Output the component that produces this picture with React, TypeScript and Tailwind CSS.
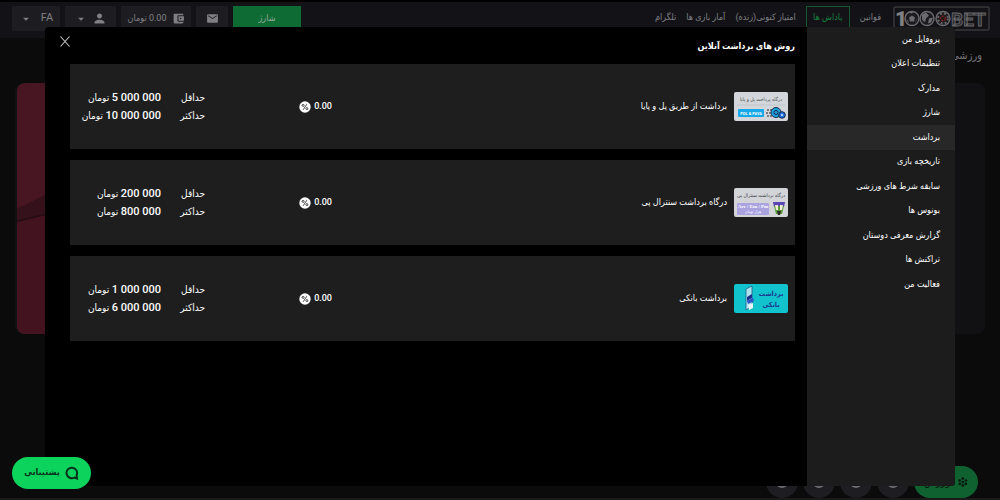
import React, { useState } from 'react';
import { MdPerson, MdEmail, MdAccountBalanceWallet, MdArrowDropDown } from 'react-icons/md';

const navLinks = [
  { label: 'قوانین' },
  { label: 'پاداش ها', highlighted: true },
  { label: 'امتیاز کنونی(زنده)' },
  { label: 'آمار بازی ها' },
  { label: 'تلگرام' },
];

const menuItems = [
  'پروفایل من',
  'تنظیمات اعلان',
  'مدارک',
  'شارژ',
  'برداشت',
  'تاریخچه بازی',
  'سابقه شرط های ورزشی',
  'بونوس ها',
  'گزارش معرفی دوستان',
  'تراکنش ها',
  'فعالیت من',
];

const methods = [
  { id: 'paya', name: 'برداشت از طریق پل و پایا', fee: '0.00', min: '5 000 000', max: '10 000 000' },
  { id: 'central', name: 'درگاه برداشت سنترال پی', fee: '0.00', min: '200 000', max: '800 000' },
  { id: 'bank', name: 'برداشت بانکی', fee: '0.00', min: '1 000 000', max: '6 000 000' },
];

const FONT = "font-[Roboto,'DejaVu_Sans_Condensed','DejaVu_Sans',sans-serif]";
const SVG_FONT = "'DejaVu Sans Condensed', 'DejaVu Sans', sans-serif";

const Logo: React.FC = () => (
  <svg width="97" height="25" viewBox="0 0 97 25" aria-label="1000BET" direction="ltr">
    <rect x="1" y="1" width="95" height="23" rx="1" fill="none" stroke="#4a4a4c" />
    <text x="2" y="20" fontSize="21" fontWeight="900" fill="#808083" fontFamily="Roboto, sans-serif">1</text>
    <g fill="#1b1b1d" stroke="#6c6c70" strokeWidth="1.4">
      <circle cx="19" cy="12.5" r="7" />
      <circle cx="34" cy="12.5" r="7" />
      <circle cx="50" cy="12.5" r="7" />
    </g>
    <path d="M19 9.5l3 2-1 4h-4l-1-4zM15 6.5l3-1 2 1-1 1zM13 13.5l2 1 1 3M25 11.5l-2 3-1 3" fill="#6c6c70" />
    <path d="M29 8.5l4-2 3 3-3 3-1 4-3-3zM36 12.5l4-1-2 5-3 1z" fill="#6c6c70" />
    <circle cx="50" cy="12.5" r="5" fill="none" stroke="#66666a" strokeWidth="2" strokeDasharray="2 2" />
    <circle cx="50" cy="12.5" r="2.4" fill="none" stroke="#8a1f1f" strokeWidth="1.2" strokeDasharray="2 1" />
    <text x="58" y="20" fontSize="19" fontWeight="700" fill="#2c2c2f" stroke="#68686b" strokeWidth="0.9" fontFamily="Roboto, sans-serif">BET</text>
  </svg>
);

const BallIcon: React.FC = () => (
  <svg width="14" height="14" viewBox="0 0 14 14" fill="#06180d" aria-hidden="true">
    <circle cx="7" cy="7" r="2" />
    <circle cx="7" cy="2" r="1.9" />
    <circle cx="11.6" cy="4.7" r="1.9" />
    <circle cx="11.4" cy="9.8" r="1.9" />
    <circle cx="7" cy="12" r="1.9" />
    <circle cx="2.6" cy="9.8" r="1.9" />
    <circle cx="2.4" cy="4.7" r="1.9" />
  </svg>
);

const PercentIcon: React.FC = () => (
  <svg width="12" height="12" viewBox="0 0 12 12" aria-hidden="true">
    <circle cx="6" cy="6" r="5.7" fill="#fff" />
    <g fill="none" stroke="#1e1e1e" strokeWidth="0.8">
      <path d="M7.8 3.2L4.2 8.8" />
      <circle cx="4.1" cy="4.4" r="1" />
      <circle cx="7.9" cy="7.6" r="1" />
    </g>
  </svg>
);

const Thumbnail: React.FC<{ id: string }> = ({ id }) => {
  if (id === 'paya') {
    return (
      <svg width="54" height="29" viewBox="0 0 54 29" direction="rtl" aria-hidden="true">
        <rect width="54" height="29" rx="2" fill="#d3d6da" />
        <text x="27" y="9" fontSize="5" fill="#44474c" textAnchor="middle" fontFamily={SVG_FONT}>درگاه پرداخت پل و پایا</text>
        <path d="M3 13h48" stroke="#b5b8bd" strokeWidth="0.6" />
        <rect x="4" y="17" width="26" height="8" rx="1" fill="#16a9ea" />
        <text x="17" y="23" fontSize="4" fontWeight="700" fill="#fff" textAnchor="middle" direction="ltr" fontFamily="Roboto, sans-serif">POL &amp; PAYA</text>
        <path d="M33 18h5M32 21h5M33 24h5" stroke="#20242c" strokeWidth="1" strokeDasharray="2 1" />
        <circle cx="42" cy="20.5" r="5" fill="#1d9fe0" stroke="#172b45" />
        <circle cx="42" cy="20.5" r="2" fill="none" stroke="#172b45" />
        <circle cx="48" cy="23" r="3.3" fill="#2370e0" stroke="#172b45" />
        <circle cx="48" cy="23" r="1" fill="#d3e8fb" />
      </svg>
    );
  }
  if (id === 'central') {
    return (
      <svg width="54" height="29" viewBox="0 0 54 29" direction="rtl" aria-hidden="true">
        <rect width="54" height="29" rx="2" fill="#d3d4d8" />
        <text x="27" y="9" fontSize="5" fill="#33353a" textAnchor="middle" fontFamily={SVG_FONT}>درگاه برداشت سنترال پی</text>
        <rect x="3" y="15" width="32" height="12" rx="1" fill="#aaa3e0" />
        <text x="19" y="20" fontSize="5" fontWeight="700" fill="#fff" textAnchor="middle" direction="ltr" fontFamily="'Liberation Serif', serif">Asv / Em / Pm</text>
        <text x="19" y="25" fontSize="4" fill="#fff" textAnchor="middle" fontFamily={SVG_FONT}>هزار تومان</text>
        <path d="M39 14h12l-1 5h-10z" fill="#5a45b5" />
        <path d="M40 18h10l-2 8h-6z" fill="#5c9a3c" />
        <path d="M41 17h3v5h-2zM46 17h3l-1 5h-2z" fill="#f1ead2" />
        <path d="M43 23h4l-1 4h-2z" fill="#2c2a25" />
      </svg>
    );
  }
  return (
    <svg width="54" height="29" viewBox="0 0 54 29" direction="rtl" aria-hidden="true">
      <rect width="54" height="29" rx="2" fill="#10c3cc" />
      <path d="M12 5l6-3v20l-6 4z" fill="#a9e3ee" stroke="#1c4a86" strokeWidth="0.7" />
      <path d="M13 13l5-3v4l-5 3z" fill="#1b2f86" />
      <path d="M13 17l6-3 1 3-6 3z" fill="#2a55c8" />
      <path d="M14 21l5-2v5l-4 2z" fill="#e8f3f5" />
      <text x="37" y="12" fontSize="7" fontWeight="700" fill="#1d3790" textAnchor="middle" fontFamily={SVG_FONT}>برداشت</text>
      <text x="37" y="23" fontSize="7" fontWeight="700" fill="#1d3790" textAnchor="middle" fontFamily={SVG_FONT}>بانکی</text>
    </svg>
  );
};

const Header: React.FC = () => (
  <header className="flex h-[38px] items-start justify-between border-t-2 border-black bg-[#131317] pl-3 pr-[10px] pt-1 text-[9px] text-[#808084]">
    <div className="flex items-start gap-3">
      <a href="#home">
        <Logo />
      </a>
      <nav className="flex items-start gap-[10px]">
        {navLinks.map((link) => (
          <a
            key={link.label}
            href="#nav"
            className={
              link.highlighted
                ? 'flex h-6 w-11 items-center justify-center whitespace-nowrap border border-[#12592f] text-[#158040]'
                : 'flex h-6 items-center whitespace-nowrap'
            }
          >
            {link.label}
          </a>
        ))}
      </nav>
    </div>

    <div className="flex gap-[5px]">
      <button type="button" className="h-[25px] w-[68px] bg-[#0f6b34] text-[#96a79b]">شارژ</button>
      <button type="button" aria-label="پیام ها" className="flex h-[25px] w-8 items-center justify-center bg-[#1d1d21]">
        <MdEmail size={13} />
      </button>
      <button type="button" className="flex h-[25px] w-[70px] items-center justify-center gap-[5px] whitespace-nowrap bg-[#1d1d21]">
        <MdAccountBalanceWallet size={13} />
        <span>0.00 تومان</span>
      </button>
      <button type="button" aria-label="حساب کاربری" className="flex h-[25px] w-[51px] items-center justify-center gap-1 bg-[#1d1d21]">
        <MdPerson size={15} />
        <MdArrowDropDown size={14} />
      </button>
      <button type="button" className="flex h-[25px] w-12 items-center justify-center gap-2 bg-[#1d1d21] text-[11px]">
        FA
        <MdArrowDropDown size={14} />
      </button>
    </div>
  </header>
);

const Banner: React.FC = () => (
  <section className="mx-[15px] mt-2 flex h-[251px] justify-end overflow-hidden rounded-lg bg-[#111113] pl-[2px]">
    <svg className="h-full w-1/2 rounded-l-lg" viewBox="0 0 480 251" preserveAspectRatio="xMinYMin slice" aria-hidden="true">
      <rect width="480" height="251" fill="#481522" />
      <path d="M0 125L30 110V250H0z" fill="#431420" />
      <path d="M0 125L30 110V130L0 138z" fill="#34111b" />
      <path d="M0 137L30 130" stroke="#260c14" strokeWidth="1.5" />
    </svg>
  </section>
);

const MethodCard: React.FC<{ method: (typeof methods)[number] }> = ({ method }) => (
  <li className="flex h-[85px] items-center bg-[#1e1e1e] pl-3 pr-[7px] text-[10px] font-medium text-white">
    <button type="button" className="flex flex-1 items-center gap-[7px] text-[9px]">
      <Thumbnail id={method.id} />
      <span className="whitespace-nowrap">{method.name}</span>
    </button>
    <div className="flex w-[127px] items-center gap-[3px] text-[9px]">
      <span>{method.fee}</span>
      <PercentIcon />
    </div>
    <dl className="grid w-[123px] grid-cols-[44px_1fr] whitespace-nowrap leading-[18px]">
      <dt>حداقل</dt>
      <dd>
        <bdi className="text-[11px]">{method.min}</bdi> تومان
      </dd>
      <dt>حداکثر</dt>
      <dd>
        <bdi className="text-[11px]">{method.max}</bdi> تومان
      </dd>
    </dl>
  </li>
);

const App: React.FC = () => {
  const [active, setActive] = useState('برداشت');
  const [isOpen, setIsOpen] = useState(true);

  return (
    <div dir="rtl" className={`relative flex h-screen flex-col overflow-hidden bg-[#0b0b0b] ${FONT}`}>
      <Header />
      <div className="flex h-[37px] items-center px-[18px] text-[11px] text-[#77777b]">
        <a href="#sports">ورزشی</a>
      </div>
      <Banner />

      {/* Bottom shortcuts */}
      <div className="mt-auto flex justify-start gap-[5px] border-b-2 border-[#1a1a1a] px-[22px]">
        <button type="button" className="flex h-8 w-16 items-center gap-2 rounded-full bg-[#0f6230] px-[10px] text-[11px] text-[#06180d]">
          <BallIcon />
          ورزش
        </button>
        {[1, 2, 3, 4].map((n) => (
          <button key={n} type="button" aria-label={`میانبر ${n}`} className="flex h-8 w-8 items-center justify-center rounded-full bg-[#1d1d22]">
            <span className="size-3 rounded-full bg-[#6c6c70]" />
          </button>
        ))}
      </div>

      {/* Account modal */}
      {isOpen && (
        <div className="absolute inset-0 flex px-[45px] pb-[14px] pt-[27px]">
          <div role="dialog" aria-label="برداشت" className="flex flex-1 overflow-hidden rounded bg-black">
            <aside className="w-[148px] shrink-0 bg-[#1c1c1c]">
              <nav className="grid h-[270px] auto-rows-fr">
                {menuItems.map((item) => (
                  <button
                    key={item}
                    type="button"
                    onClick={() => setActive(item)}
                    className={
                      item === active
                        ? 'whitespace-nowrap bg-[#282828] pr-[15px] text-right text-[9px] text-white'
                        : 'whitespace-nowrap pr-[15px] text-right text-[9px] text-white'
                    }
                  >
                    {item}
                  </button>
                ))}
              </nav>
            </aside>

            <main className="flex-1 pl-[25px] pr-3">
              <div className="flex h-[37px] items-start justify-between">
                <h1 className="pt-[9px] text-[9px] font-bold leading-5 text-white">روش های برداشت آنلاین</h1>
                <button type="button" aria-label="بستن" onClick={() => setIsOpen(false)} className="-ml-[10px] pt-[9px]">
                  <svg width="10" height="11" viewBox="0 0 10 11" stroke="#c8c8c8" strokeWidth="1.1">
                    <path d="M0.5 0.5L9.5 10.5M9.5 0.5L0.5 10.5" />
                  </svg>
                </button>
              </div>
              <ul className="flex flex-col gap-[11px]">
                {methods.map((method) => (
                  <MethodCard key={method.id} method={method} />
                ))}
              </ul>
            </main>
          </div>
        </div>
      )}

      {/* Support chat */}
      <button type="button" className="absolute bottom-[11px] left-3 flex h-8 w-[79px] items-center justify-center gap-[5px] rounded-full bg-[#0bd35c] text-[9px] font-bold text-[#07301a]">
        <svg width="14" height="14" viewBox="0 0 14 14" fill="none" stroke="#07301a" strokeWidth="2" aria-hidden="true">
          <path d="M9.5 11.5A5.3 5.3 0 1 1 11.6 9.2L12 12.5z" />
        </svg>
        پشتیبانی
      </button>
    </div>
  );
};

export default App;
